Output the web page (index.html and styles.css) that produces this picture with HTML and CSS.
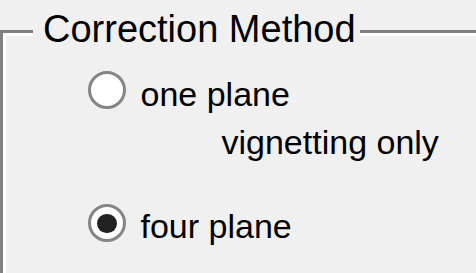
FILE: index.html
```html
<!DOCTYPE html>
<html>
<head>
<meta charset="utf-8">
<link rel="stylesheet" href="styles.css">
</head>
<body>
<div class="group">
  <div class="legend">Correction Method</div>
  <div class="inner">
    <div class="row row-one">
      <span class="radio"></span>
      <span class="label">one plane</span>
    </div>
    <div class="note">vignetting only</div>
    <div class="row row-four">
      <span class="radio checked"></span>
      <span class="label">four plane</span>
    </div>
  </div>
</div>
</body>
</html>
```
FILE: styles.css
```css
html, body {
  margin: 0;
  padding: 0;
}
body {
  width: 476px;
  height: 273px;
  overflow: hidden;
  background: #f0f0f0;
  font-family: "Liberation Sans", Arial, sans-serif;
  color: #000;
}
.group {
  position: relative;
  margin-top: 30px;
  height: 243px;
  border-top: 3px solid #808080;
  border-left: 3px solid #808080;
}
.inner {
  height: 100%;
  box-sizing: border-box;
  border-top: 3px solid #fff;
  border-left: 3px solid #fff;
  padding-top: 35px;
  padding-left: 82px;
}
.legend {
  position: absolute;
  left: 30px;
  top: -23px;
  padding: 0 4px 0 10px;
  background: #f0f0f0;
  font-size: 38px;
  line-height: 38px;
  white-space: nowrap;
}
.row {
  display: flex;
  align-items: flex-start;
  gap: 14.5px;
}
.label, .note {
  font-size: 34px;
  line-height: 40px;
  white-space: nowrap;
}
.row-one .label {
  margin-top: 3.3px;
}
.note {
  margin-top: 7.5px;
  padding-left: 133.5px;
}
.row-four {
  margin-top: 42.5px;
}
.row-four .label {
  margin-top: 1.9px;
}
.radio {
  flex: none;
  width: 38px;
  height: 38px;
  box-sizing: border-box;
  border-radius: 50%;
  border: 3.5px solid #858585;
  background: #fff;
  display: flex;
  align-items: center;
  justify-content: center;
}
.radio.checked::after {
  content: "";
  width: 19.5px;
  height: 19.5px;
  border-radius: 50%;
  background: #212121;
}
```
